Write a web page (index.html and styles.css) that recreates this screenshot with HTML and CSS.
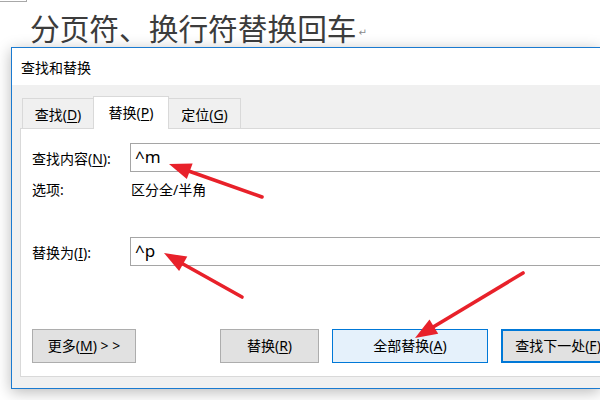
FILE: index.html
```html
<!DOCTYPE html>
<html lang="zh-CN">
<head>
<meta charset="utf-8">
<title>查找和替换</title>
<link rel="stylesheet" href="styles.css">
</head>
<body>
<div class="corner"></div>
<h1 class="doc-heading">分页符、换行符替换回车<span class="return-mark">↵</span></h1>

<div class="dialog">
  <div class="titlebar">查找和替换</div>
  <div class="dialog-body">
    <div class="tabs">
      <div class="tab tab-first">查找(<u>D</u>)</div>
      <div class="tab tab-active">替换(<u>P</u>)</div>
      <div class="tab tab-last">定位(<u>G</u>)</div>
    </div>
    <div class="panel">
      <div class="field-row row-find">
        <div class="label">查找内容(<u>N</u>):</div>
        <div class="input">^m</div>
      </div>
      <div class="field-row row-options">
        <div class="label">选项:</div>
        <div class="value">区分全/半角</div>
      </div>
      <div class="field-row row-replace">
        <div class="label">替换为(<u>I</u>):</div>
        <div class="input">^p</div>
      </div>
      <div class="buttons">
        <div class="btn btn-more">更多(<u>M</u>) &gt; &gt;</div>
        <div class="btn btn-replace">替换(<u>R</u>)</div>
        <div class="btn btn-all">全部替换(<u>A</u>)</div>
        <div class="btn btn-next">查找下一处(<u>F</u>)</div>
      </div>
    </div>
  </div>
</div>

<svg class="arrows" width="600" height="400" viewBox="0 0 600 400" xmlns="http://www.w3.org/2000/svg">
  <g stroke="#e8212a" stroke-width="3.6" stroke-linecap="round" fill="none">
    <line x1="262" y1="197" x2="190" y2="171.5"/>
    <line x1="242" y1="297" x2="183" y2="264"/>
    <line x1="523" y1="273" x2="434" y2="326.5"/>
  </g>
  <g fill="#e8212a">
    <polygon points="169,164 192.6,163.6 186.8,179.1"/>
    <polygon points="164,253 187.3,256.6 179.1,271"/>
    <polygon points="415,338 429.5,319.6 438.2,333.7"/>
  </g>
</svg>
</body>
</html>
```

FILE: styles.css
```css
html, body {
  margin: 0;
  padding: 0;
}

body {
  width: 600px;
  height: 400px;
  overflow: hidden;
  background: #ffffff;
  position: relative;
  font-family: "Noto Sans", "Noto Sans CJK SC", sans-serif;
  color: #000;
}

u {
  text-decoration: underline;
  text-underline-offset: 2px;
  text-decoration-thickness: 1px;
}

.corner {
  width: 26px;
  height: 1px;
  border-right: 1px solid #a8a8a8;
  border-bottom: 1px solid #a8a8a8;
}

.doc-heading {
  margin: 0;
  height: 35px;
  padding: 10px 0 0 30px;
  font-family: "Noto Sans CJK SC", sans-serif;
  font-weight: 400;
  font-size: 29.7px;
  line-height: 32px;
  color: #3c3c3c;
  white-space: nowrap;
}

.return-mark {
  font-family: "DejaVu Sans", sans-serif;
  font-size: 10px;
  color: #8a8a8a;
  vertical-align: 4px;
  margin-left: 2px;
}

.dialog {
  margin-left: 11px;
  width: 588px;
  border: 1px solid #1a7ad0;
  border-right: none;
  box-shadow: 0 3px 14px rgba(0, 0, 0, 0.28);
  background: #f0f0f0;
}

.titlebar {
  height: 34px;
  padding: 3px 0 0 9px;
  background: #ffffff;
  font-size: 14px;
  line-height: 34px;
}

.dialog-body {
  padding: 11px 0 11px 8px;
  background: #f0f0f0;
}

.tabs {
  display: flex;
  align-items: flex-end;
  padding-left: 2px;
  height: 32px;
  font-size: 14px;
}

.tab {
  box-sizing: border-box;
  height: 30px;
  padding-top: 3px;
  line-height: 26px;
  text-align: center;
  border: 1px solid #d9d9d9;
  border-bottom: none;
  background: #f0f0f0;
}

.tab-first {
  width: 71px;
  border-right: none;
}

.tab-active {
  width: 76px;
  height: 33px;
  padding-top: 3px;
  margin-bottom: -1px;
  background: #ffffff;
  position: relative;
  z-index: 1;
}

.tab-last {
  width: 72px;
  border-left: none;
}

.panel {
  background: #ffffff;
  border: 1px solid #d9d9d9;
  border-right: none;
  padding: 14px 0 13px 11px;
  font-size: 14px;
  overflow: hidden;
}

.field-row {
  display: flex;
  align-items: center;
}

.label {
  width: 98px;
  flex: none;
  white-space: nowrap;
}

.input {
  flex: 1;
  box-sizing: border-box;
  height: 29px;
  border: 1px solid #a5a5a5;
  border-right: none;
  padding-left: 4px;
  font-family: "Noto Sans", sans-serif;
  font-size: 17px;
  line-height: 25px;
}

.row-options {
  margin-top: 8px;
  height: 20px;
  line-height: 20px;
}

.value {
  padding-left: 1px;
}

.row-replace {
  margin-top: 37px;
}

.buttons {
  display: flex;
  margin-top: 63px;
  height: 34px;
}

.btn {
  box-sizing: border-box;
  height: 34px;
  line-height: 32px;
  text-align: center;
  background: #e1e1e1;
  border: 1px solid #adadad;
  white-space: nowrap;
  flex: none;
}

.btn-more {
  width: 104px;
  margin-right: 84px;
}

.btn-replace {
  width: 99px;
  margin-right: 13px;
}

.btn-all {
  width: 156px;
  margin-right: 13px;
  background: #e5f1fb;
  border-color: #0078d7;
}

.btn-next {
  width: 114px;
  border: 2px solid #0078d7;
  line-height: 30px;
}

.arrows {
  position: absolute;
  left: 0;
  top: 0;
  pointer-events: none;
}
```
